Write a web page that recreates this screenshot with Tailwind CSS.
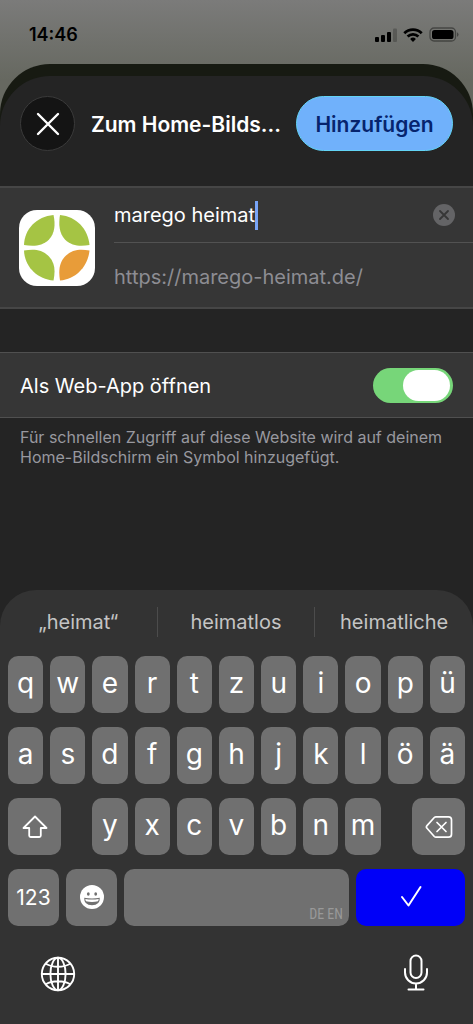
<!DOCTYPE html>
<html lang="de">
<head>
<meta charset="utf-8">
<meta name="viewport" content="width=device-width, initial-scale=1">
<title>Zum Home-Bildschirm</title>
<script src="https://cdn.jsdelivr.net/npm/@tailwindcss/browser@4"></script>
</head>
<body class="flex min-h-screen flex-col bg-[#6a6b65] bg-linear-to-b from-[#7b7b7a] from-0% to-[#666860] to-[80px] font-[Inter,sans-serif] text-white">
  <header class="flex h-16 shrink-0 items-center justify-between pr-[14px] pl-[29px] pt-[5px] text-black">
    <time class="text-lg font-semibold">14:46</time>
    <div class="flex items-center gap-[6px]">
      <svg class="h-[14px] w-[22px]" viewBox="0 0 22 14" fill="currentColor" aria-label="Mobilfunk">
        <rect x="0" y="9" width="4" height="5" rx="1"/><rect x="6" y="7" width="4" height="7" rx="1"/><rect x="12" y="4" width="4" height="10" rx="1"/><rect x="18" y="0.500" width="4" height="13.500" rx="1" opacity=".22"/>
      </svg>
      <svg class="h-[14px] w-5" viewBox="0 0 20 14" fill="none" stroke="currentColor" stroke-width="2.800" aria-label="WLAN">
        <path d="M1.300 5.200a12.500 12.500 0 0 1 17.400 0"/><path d="M4.600 8.600a7.800 7.800 0 0 1 10.800 0"/><path d="M10 14 7.100 11a4.200 4.200 0 0 1 5.800 0Z" fill="currentColor" stroke="none"/>
      </svg>
      <svg class="h-[15px] w-[30px]" viewBox="0 0 30 15" aria-label="Batterie">
        <rect x="1" y="1" width="25.500" height="13" rx="4" fill="none" stroke="#000" stroke-opacity=".4" stroke-width="1.300"/><rect x="3" y="3" width="21.500" height="9" rx="2.600"/><path d="M28 5.200a2.500 2.500 0 0 1 0 4.600Z" fill-opacity=".4"/>
      </svg>
    </div>
  </header>

  <div class="flex grow flex-col rounded-t-[50px] bg-[#171a12] pt-3">
    <main class="flex grow flex-col rounded-t-[50px] bg-[#242424]">
      <div class="flex h-[110px] items-center gap-4 px-5 pb-[15px]">
        <button aria-label="Schließen" class="flex size-[55px] shrink-0 items-center justify-center rounded-full border border-[#3a3a3a] bg-[#141414]">
          <svg class="size-6" viewBox="0 0 24 24" fill="none" stroke="#fff" stroke-width="2.400" stroke-linecap="round"><path d="M2 2 22 22M22 2 2 22"/></svg>
        </button>
        <h1 class="min-w-0 grow pt-0.5 text-[21px] font-semibold whitespace-nowrap">Zum Home-Bilds...</h1>
        <button class="h-[55px] w-[157px] shrink-0 rounded-full border border-[#62d3f5] bg-[#70b1fb] pt-0.5 text-[21px] font-semibold text-[#06246e]">Hinzufügen</button>
      </div>

      <section class="flex items-center border-y-2 border-[#464646] bg-[#363636] pl-[19px]">
        <svg class="size-[76px] shrink-0" viewBox="0 0 76 76" aria-label="marego heimat">
          <rect width="76" height="76" rx="18" fill="#fff"/>
          <g fill="#a5c444">
            <path d="M34.500 5C36.500 14 36 23 30 29.500 23 36.500 14 36.500 5 35 5.500 19 17.500 6.500 34.500 5Z"/>
            <path d="M41 5C39.500 14 40 23 46 29.500 53 36.500 62 36.500 70.500 35 69 19 57.500 6.500 41 5Z"/>
            <path d="M34.500 70.500C36.500 61 36 53 30 46.500 23 39 14 39 5 40.500 5.500 56 17.500 69 34.500 70.500Z"/>
          </g>
          <path fill="#e89c39" d="M41 70.500C39.500 61 40 53 46 46.500 53 39 62 39 70.500 40.500 69 56 57.500 69 41 70.500Z"/>
        </svg>
        <div class="ml-[19px] min-w-0 grow">
          <div class="flex h-[55px] items-center border-b border-[#525252] pr-[18px]">
            <input aria-label="Name" value="marego heimat" class="field-sizing-content bg-transparent text-xl outline-none">
            <span class="h-[29px] w-[3px] shrink-0 bg-[#78a5f8]"></span>
            <button aria-label="Text löschen" class="ml-auto">
              <svg class="size-[22px]" viewBox="0 0 22 22"><circle cx="11" cy="11" r="11" fill="#646466"/><path d="m7 7 8 8m0-8-8 8" stroke="#363636" stroke-width="1.800" stroke-linecap="round"/></svg>
            </button>
          </div>
          <a href="https://marego-heimat.de/" class="flex h-16 items-center pt-1 text-xl text-[#8d8d93]">https://marego-heimat.de/</a>
        </div>
      </section>

      <section class="mt-[43px] flex h-[66px] items-center justify-between border-y border-[#505050] bg-[#363636] px-5">
        <label for="webapp" class="pt-0.5 text-xl">Als Web-App öffnen</label>
        <input id="webapp" type="checkbox" role="switch" checked class="flex h-[35px] w-20 appearance-none items-center justify-end rounded-full bg-[#77d679] px-[3px] before:h-[31px] before:w-[47px] before:rounded-full before:bg-white before:content-['']">
      </section>
      <p class="px-5 pt-[9px] text-base leading-5 text-[#98989f]">Für schnellen Zugriff auf diese Website wird auf deinem Home-Bildschirm ein Symbol hinzugefügt.</p>

      <div class="mt-auto rounded-t-[36px] bg-[#333] px-2">
        <div class="-mx-2 grid h-[66px] grid-cols-3 items-center divide-x divide-[#4c4c4c] pb-0.5 text-xl text-[#c4c4c4]">
          <button class="h-[30px]">„heimat“</button>
          <button class="h-[30px]">heimatlos</button>
          <button class="h-[30px]">heimatliche</button>
        </div>
        <div class="grid grid-cols-11 gap-x-[7px] gap-y-[14px] text-[28px] leading-8 *:flex *:h-[57px] *:items-center *:justify-center *:rounded-[10px] *:bg-[#707070] *:pb-1">
          <button>q</button><button>w</button><button>e</button><button>r</button><button>t</button><button>z</button><button>u</button><button>i</button><button>o</button><button>p</button><button>ü</button>
          <button>a</button><button>s</button><button>d</button><button>f</button><button>g</button><button>h</button><button>j</button><button>k</button><button>l</button><button>ö</button><button>ä</button>
          <button aria-label="Umschalttaste" class="col-span-2 w-[53px]">
            <svg class="mt-1 h-6 w-[26px]" viewBox="0 0 26 24" fill="none" stroke="#fff" stroke-width="1.800" stroke-linejoin="round"><path d="M13 1.500 1.500 13H7.200v7.500q0 1.500 1.500 1.500h8.600q1.500 0 1.500-1.500V13h5.700Z"/></svg>
          </button>
          <button>y</button><button>x</button><button>c</button><button>v</button><button>b</button><button>n</button><button>m</button>
          <button aria-label="Löschen" class="col-span-2 w-[53px] justify-self-end">
            <svg class="mt-1 h-6 w-7" viewBox="0 0 28 24" fill="none" stroke="#fff" stroke-width="1.700" stroke-linecap="round" stroke-linejoin="round"><path d="M11 1.800h12.500q3 0 3 3v14.400q0 3-3 3H11q-1 0-1.700-.7L2 13.300q-1.200-1.300 0-2.600L9.300 2.500q.7-.7 1.700-.7Z"/><path d="m12 7.500 9 9m0-9-9 9"/></svg>
          </button>
        </div>
        <div class="mt-[14px] flex gap-[7px] *:h-[57px] *:rounded-[10px]">
          <button class="w-[51px] bg-[#707070] text-[21px]">123</button>
          <button aria-label="Emoji" class="flex w-[51px] items-center justify-center bg-[#707070] pb-0.5">
            <svg class="size-6" viewBox="0 0 24 24"><circle cx="12" cy="12" r="12" fill="#fff"/><g fill="#707070"><ellipse cx="8.300" cy="9" rx="1.400" ry="1.800"/><ellipse cx="15.700" cy="9" rx="1.400" ry="1.800"/><path d="M4.200 12.800q7.800 1.200 15.600 0 .4 7.400-7.800 7.400t-7.800-7.400Z"/></g><path d="M5.300 14q6.700 1 13.400 0-.1 1.400-.7 2.300-6 1.500-12 0-.6-.9-.7-2.300Z" fill="#fff"/></svg>
          </button>
          <button aria-label="Leerzeichen" class="flex grow items-end justify-end bg-[#707070] pr-[6px] pb-1 font-['Roboto_Condensed',Roboto,sans-serif] text-sm leading-4 text-[#999]">DE EN</button>
          <button aria-label="Fertig" class="flex w-[109px] items-center justify-center bg-[#0000f8] pb-1">
            <svg class="h-[22px] w-[22px]" viewBox="0 0 22 22" fill="none" stroke="#fff" stroke-width="2" stroke-linecap="round" stroke-linejoin="round"><path d="m2 12 6.500 8.500L20.500 2"/></svg>
          </button>
        </div>
        <div class="flex h-[98px] items-start justify-between px-8 pt-7">
          <button aria-label="Tastatur wechseln" class="mt-0.5">
            <svg class="size-9" viewBox="0 0 36 36" fill="none" stroke="#fff" stroke-width="1.900"><circle cx="18" cy="18" r="16.200"/><ellipse cx="18" cy="18" rx="7.600" ry="16.200"/><path d="M18 1.800v32.400M1.800 18h32.400M5.800 7.800q5 3 12.200 3t12.200-3M5.800 28.200q5-3 12.200-3t12.200 3"/></svg>
          </button>
          <button aria-label="Diktieren" class="mr-1">
            <svg class="h-[37px] w-[26px]" viewBox="0 0 26 37" fill="none" stroke="#fff" stroke-width="2" stroke-linecap="round"><rect x="7.500" y="1.500" width="11" height="22.500" rx="5.500"/><path d="M2 15v3.500a11 11 0 0 0 22 0V15M13 29.500v6M5.500 35.500h15"/></svg>
          </button>
        </div>
      </div>
    </main>
  </div>
</body>
</html>
